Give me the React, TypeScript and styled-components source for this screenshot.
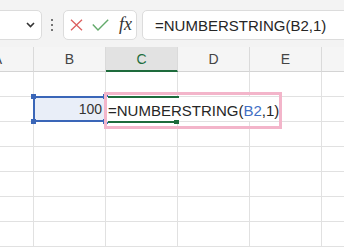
import React from "react";
import styled, { createGlobalStyle } from "styled-components";

/* ================================
   BASE
================================ */

const GlobalStyle = createGlobalStyle`
  * { box-sizing: border-box; }
  html, body {
    margin: 0;
    padding: 0;
    background: #ffffff;
    overflow: hidden;
  }
  body {
    font-family: "Liberation Sans", Arial, sans-serif;
    color: #333333;
  }
`;

const Screen = styled.div`
  width: 344px;
  height: 251px;
  overflow: hidden;
  background: #ffffff;
`;

/* ================================
   TOOLBAR (name box + formula bar)
================================ */

const Toolbar = styled.div`
  height: 47px;
  background: #f3f3f3;
  display: flex;
  align-items: flex-start;
  padding-top: 10px;
`;

const Field = styled.div`
  height: 30px;
  background: #ffffff;
  border: 1px solid #dcdcdc;
  border-radius: 5px;
  display: flex;
  align-items: center;
`;

/* a caixa de nome começa fora da tela, à esquerda */
const NameBox = styled(Field)`
  width: 80px;
  margin-left: -38px;
  justify-content: flex-end;
  padding-right: 6px;
`;

const Dots = styled.div`
  width: 20px;
  height: 30px;
  display: flex;
  flex-direction: column;
  align-items: center;
  justify-content: center;
  gap: 2.5px;

  span {
    width: 2.5px;
    height: 2.5px;
    border-radius: 50%;
    background: #4a4a4a;
  }
`;

const ButtonGroup = styled(Field)`
  width: 74px;
  margin-left: 1px;
  padding-left: 6px;
  gap: 9px;
`;

const Fx = styled.span`
  font-family: "Liberation Serif", "Times New Roman", serif;
  font-style: italic;
  font-size: 18px;
  color: #333333;
  margin-left: 1px;
  line-height: 1;
  margin-top: -2px;
`;

const FormulaBox = styled(Field)`
  flex: 1;
  margin-left: 5px;
  margin-right: -20px;
  padding-left: 12px;
`;

const FormulaText = styled.span`
  font-size: 15px;
  color: #262626;
  white-space: nowrap;
`;

/* ================================
   GRID
================================ */

const Row = styled.div<{ $header?: boolean }>`
  display: grid;
  grid-template-columns: repeat(6, 72px);
  margin-left: -38px;
  height: 25px;
  background: ${(p) => (p.$header ? "#f5f5f5" : "#ffffff")};
`;

const HeadCell = styled.div<{ $active?: boolean }>`
  display: flex;
  align-items: center;
  justify-content: center;
  font-size: 14px;
  color: ${(p) => (p.$active ? "#1e6e3e" : "#444444")};
  background: ${(p) => (p.$active ? "#e2e2e2" : "transparent")};
  border-right: 1px solid #dadada;
  border-bottom: ${(p) => (p.$active ? "2px solid #1e6b3c" : "1px solid #d4d4d4")};
`;

const Cell = styled.div`
  position: relative;
  border-right: 1px solid #e1e1e1;
  border-bottom: 1px solid #e1e1e1;
  font-size: 14px;
  display: flex;
  align-items: center;
`;

const SelectedCell = styled(Cell)`
  background: #e9eef8;
  justify-content: flex-end;
  padding-right: 3px;
  color: #333333;

  &::after {
    content: "";
    position: absolute;
    inset: -1px -1px -1px -1px;
    border: 2px solid #3a66b8;
    pointer-events: none;
    z-index: 2;
  }
`;

const Handle = styled.i<{ $top?: boolean; $left?: boolean }>`
  position: absolute;
  width: 5px;
  height: 5px;
  background: #3a66b8;
  z-index: 3;
  ${(p) => (p.$top ? "top: -3px;" : "bottom: -3px;")}
  ${(p) => (p.$left ? "left: -3px;" : "right: -3px;")}
`;

const EditCell = styled(Cell)`
  z-index: 4;
  overflow: visible;
`;

/* conteúdo em edição que transborda para as colunas D e E */
const EditText = styled.span`
  position: absolute;
  left: 1px;
  top: 0;
  bottom: 0;
  width: 176px;
  padding-left: 1px;
  display: flex;
  align-items: center;
  background: #ffffff;
  font-size: 15px;
  color: #262626;
  white-space: nowrap;
  border-top: 2px solid transparent;
`;

const GreenEdge = styled.i<{ $bottom?: boolean }>`
  position: absolute;
  left: 2px;
  width: 71px;
  height: 2px;
  background: #1e6b3c;
  z-index: 5;
  ${(p) => (p.$bottom ? "bottom: -2px;" : "top: -1px;")}
`;

const FillHandle = styled.i`
  position: absolute;
  right: -2px;
  bottom: -3px;
  width: 5px;
  height: 4px;
  background: #1e6b3c;
  z-index: 5;
`;

const Ref = styled.span`
  color: #3f70c5;
`;

const Highlight = styled.div`
  position: absolute;
  left: -2px;
  top: -5px;
  width: 178px;
  height: 37px;
  border: 3px solid #f3b5ca;
  z-index: 6;
  pointer-events: none;
`;

const cols = ["A", "B", "C", "D", "E", ""];

export default function App() {
  return (
    <Screen>
      <GlobalStyle />
      <Toolbar>
        <NameBox>
          <svg width="9" height="6" viewBox="0 0 9 6">
            <path d="M1 1 L4.5 4.5 L8 1" fill="none" stroke="#333" strokeWidth="1.6" />
          </svg>
        </NameBox>
        <Dots>
          <span />
          <span />
          <span />
        </Dots>
        <ButtonGroup>
          <svg width="13" height="12" viewBox="0 0 13 12">
            <path d="M1 0.8 L12 11.2 M12 0.8 L1 11.2" stroke="#dc5f5f" strokeWidth="1.3" fill="none" />
          </svg>
          <svg width="17" height="12" viewBox="0 0 17 12">
            <path d="M0.8 5.5 L6 11 L16.2 0.8" stroke="#63aa6b" strokeWidth="1.4" fill="none" />
          </svg>
          <Fx>fx</Fx>
        </ButtonGroup>
        <FormulaBox>
          <FormulaText>=NUMBERSTRING(B2,1)</FormulaText>
        </FormulaBox>
      </Toolbar>

      <Row $header>
        {cols.map((c) => (
          <HeadCell key={c || "F"} $active={c === "C"}>
            {c}
          </HeadCell>
        ))}
      </Row>

      {Array.from({ length: 7 }).map((_, r) =>
        r === 1 ? (
          <Row key={r}>
            <Cell />
            <SelectedCell>
              100
              <Handle $top $left />
              <Handle $left />
              <Handle $top />
              <Handle />
            </SelectedCell>
            <EditCell>
              <EditText>
                =NUMBERSTRING(<Ref>B2</Ref>,1)
              </EditText>
              <GreenEdge />
              <GreenEdge $bottom />
              <FillHandle />
              <Highlight />
            </EditCell>
            <Cell />
            <Cell />
            <Cell />
          </Row>
        ) : (
          <Row key={r}>
            {cols.map((c) => (
              <Cell key={c || "F"} />
            ))}
          </Row>
        )
      )}
    </Screen>
  );
}
